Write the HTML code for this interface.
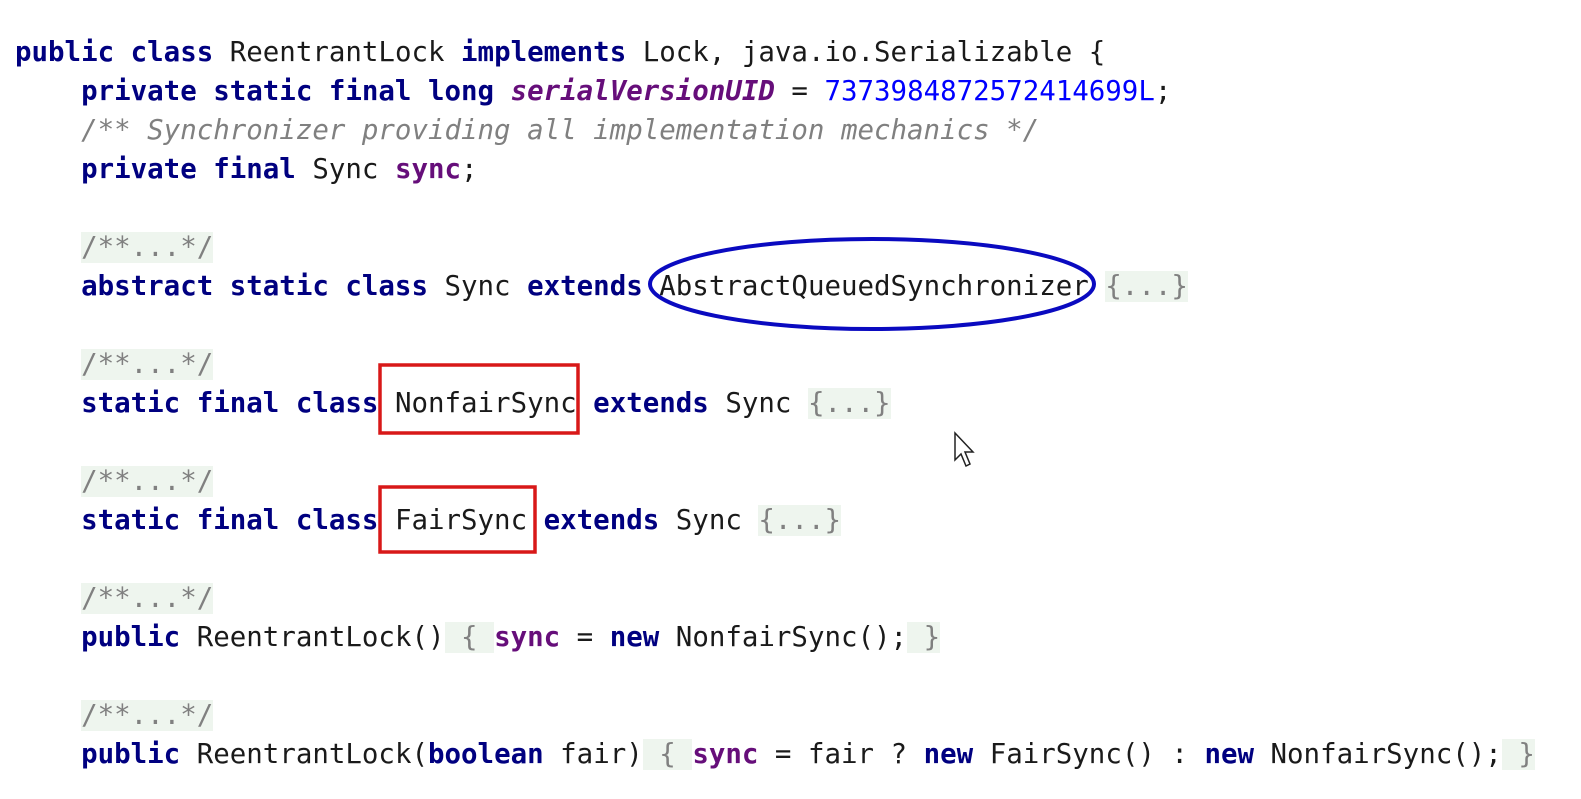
<!DOCTYPE html>
<html><head><meta charset="utf-8"><style>
html,body{margin:0;padding:0;background:#fff;width:1581px;height:799px;overflow:hidden;position:relative}
.l{position:absolute;left:15px;height:39px;line-height:39px;font-family:"DejaVu Sans Mono","Liberation Mono",monospace;font-size:27.45px;color:#1a1a1a;white-space:pre}
.k{color:#000080;font-weight:bold}
.f{color:#660e7a;font-weight:bold}
.fi{color:#660e7a;font-weight:bold;font-style:italic}
.n{color:#0000ff}
.c{color:#808080;font-style:italic}
.g{background:#eef5ee;color:#808080}
</style></head><body>
<div class="l" style="top:33px"><span class="k">public class</span> ReentrantLock <span class="k">implements</span> Lock, java.io.Serializable {</div>
<div class="l" style="top:72px">    <span class="k">private static final long</span> <span class="fi">serialVersionUID</span> = <span class="n">7373984872572414699L</span>;</div>
<div class="l" style="top:111px">    <span class="c">/** Synchronizer providing all implementation mechanics */</span></div>
<div class="l" style="top:150px">    <span class="k">private final</span> Sync <span class="f">sync</span>;</div>
<div class="l" style="top:228px">    <span class="g">/**...*/</span></div>
<div class="l" style="top:267px">    <span class="k">abstract static class</span> Sync <span class="k">extends</span> AbstractQueuedSynchronizer <span class="g">{...}</span></div>
<div class="l" style="top:345px">    <span class="g">/**...*/</span></div>
<div class="l" style="top:384px">    <span class="k">static final class</span> NonfairSync <span class="k">extends</span> Sync <span class="g">{...}</span></div>
<div class="l" style="top:462px">    <span class="g">/**...*/</span></div>
<div class="l" style="top:501px">    <span class="k">static final class</span> FairSync <span class="k">extends</span> Sync <span class="g">{...}</span></div>
<div class="l" style="top:579px">    <span class="g">/**...*/</span></div>
<div class="l" style="top:618px">    <span class="k">public</span> ReentrantLock()<span class="g"> { </span><span class="f">sync</span> = <span class="k">new</span> NonfairSync();<span class="g"> }</span></div>
<div class="l" style="top:696px">    <span class="g">/**...*/</span></div>
<div class="l" style="top:735px">    <span class="k">public</span> ReentrantLock(<span class="k">boolean</span> fair)<span class="g"> { </span><span class="f">sync</span> = fair ? <span class="k">new</span> FairSync() : <span class="k">new</span> NonfairSync();<span class="g"> }</span></div>
<svg width="1581" height="799" style="position:absolute;left:0;top:0">
<ellipse cx="872" cy="284" rx="222" ry="45" fill="none" stroke="#0a0ac0" stroke-width="4"/>
<rect x="380" y="365" width="198" height="68" fill="none" stroke="#d81818" stroke-width="3.5"/>
<rect x="380" y="487" width="155" height="65" fill="none" stroke="#d81818" stroke-width="3.5"/>
<path d="M955 433 L955 460 L961 454 L966 466 L970 464 L965 452 L973 452 Z" fill="#fff" stroke="#222" stroke-width="1.5"/>
</svg>
</body></html>
